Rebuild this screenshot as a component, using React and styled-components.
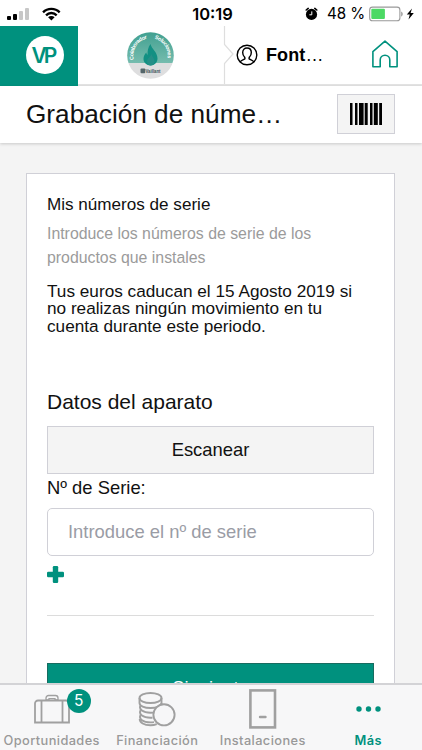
import React from "react";
import styled, { createGlobalStyle } from "styled-components";

const green = "#00917e";
const line = "#d0d0d7";

const GlobalStyle = createGlobalStyle`
  * {
    box-sizing: border-box;
  }
  body {
    margin: 0;
    background: #f4f4f4;
    color: #111;
    font-family: "Liberation Sans", Arial, sans-serif;
    overflow: hidden;
  }
`;

const Screen = styled.div`
  width: 422px;
  height: 750px;
  display: flex;
  flex-direction: column;
  overflow: hidden;
`;

const StatusBar = styled.div`
  height: 26px;
  flex: none;
  display: grid;
  grid-template-columns: 1fr 44px 1fr;
  align-items: center;
  padding: 1px 7px 0;
  background: #fff;
  color: #000;
  font-family: Inter, sans-serif;
`;

const StatusSide = styled.div`
  display: flex;
  align-items: center;
  justify-content: ${({ $end }) => ($end ? "flex-end" : "flex-start")};
`;

const Clock = styled.div`
  padding-left: 3px;
  font-size: 16.5px;
  font-weight: 600;
  text-align: center;
  white-space: nowrap;
`;

const Percent = styled.span`
  font-size: 15.2px;
  letter-spacing: -0.1px;
  margin: 0 4px 0 9px;
  white-space: nowrap;
`;

const Header = styled.header`
  height: 60px;
  flex: none;
  display: flex;
  background: #fff;
`;

const Brand = styled.div`
  width: 78px;
  display: flex;
  align-items: center;
  justify-content: center;
  padding: 0 0 3px 11px;
  background: ${green};
`;

const BrandCircle = styled.div`
  width: 38px;
  height: 38px;
  border-radius: 50%;
  background: #fff;
  color: ${green};
  font-family: Inter, sans-serif;
  font-size: 21px;
  font-weight: 600;
  line-height: 39px;
  letter-spacing: -3px;
  text-indent: -3px;
  text-align: center;
`;

const HeaderMain = styled.div`
  flex: 1;
  display: flex;
  align-items: center;
  border-bottom: 2px solid #e4e4e4;
`;

const Partner = styled.div`
  width: 145px;
  display: flex;
  padding: 0 0 0 48px;
`;

const User = styled.div`
  flex: 1;
  display: flex;
  align-items: center;
  gap: 8px;
  padding: 0 0 0 2px;
  font-size: 18px;
  font-weight: 700;
  color: #000;
`;

const UserName = styled.span`
  letter-spacing: 0.1px;
`;

const Dots = styled.span`
  font-weight: 400;
`;

const HomeLink = styled.div`
  display: flex;
  padding: 0 24px 2px 0;
`;

const TitleBar = styled.div`
  height: 57px;
  flex: none;
  display: flex;
  align-items: center;
  justify-content: space-between;
  padding: 0 27px 1px 26px;
  background: #fff;
  box-shadow: 0 1px 3px rgba(0, 0, 0, 0.18);
  z-index: 1;
`;

const Title = styled.h1`
  margin: 0;
  font-size: 26.2px;
  font-weight: 400;
  line-height: 32px;
`;

const BarcodeButton = styled.button`
  width: 58px;
  height: 40px;
  display: flex;
  align-items: center;
  justify-content: center;
  padding: 0;
  border: 1px solid ${line};
  background: #f4f4f4;
`;

const Content = styled.main`
  flex: 1;
  min-height: 0;
  overflow: hidden;
  padding: 30px 27px 0 26px;
`;

const Card = styled.section`
  height: 600px;
  padding: 21px 20px 0;
  border: 1px solid ${line};
  background: #fff;
`;

const Heading = styled.h2`
  margin: 0;
  font-size: 17.1px;
  font-weight: 400;
  line-height: 20px;
`;

const Hint = styled.p`
  margin: 7px 0 0;
  color: #9b9b9b;
  font-size: 15.85px;
  line-height: 24px;
`;

const Notice = styled.p`
  margin: 13px -6px 0 0;
  font-size: 17.2px;
  line-height: 17.4px;
`;

const FormTitle = styled.h3`
  margin: 53px 0 0;
  font-size: 21px;
  font-weight: 400;
  line-height: 28px;
`;

const ScanButton = styled.button`
  display: block;
  width: 100%;
  height: 48px;
  margin-top: 10px;
  padding: 0;
  border: 1px solid ${line};
  background: #f4f4f4;
  color: #111;
  font-family: inherit;
  font-size: 18.4px;
`;

const Label = styled.label`
  display: block;
  margin-top: 4px;
  font-size: 18.4px;
  line-height: 20px;
`;

const Input = styled.input`
  display: block;
  width: 100%;
  height: 48px;
  margin-top: 10px;
  padding: 0 20px;
  border: 1px solid ${line};
  border-radius: 5px;
  background: #fff;
  font-family: inherit;
  font-size: 18.4px;
  &::placeholder {
    color: #9a9ca5;
    opacity: 1;
  }
`;

const AddButton = styled.div`
  height: 60px;
  padding-top: 10px;
  border-bottom: 1px solid #dcdcdc;
`;

const NextButton = styled.button`
  display: block;
  width: 100%;
  height: 49px;
  margin-top: 47px;
  padding: 0;
  border: 1px solid #176c60;
  background: ${green};
  color: #fff;
  font-family: inherit;
  font-size: 18.4px;
`;

const TabBar = styled.nav`
  height: 67px;
  flex: none;
  display: grid;
  grid-template-columns: repeat(4, 105.5px);
  margin-left: -1px;
  border-top: 2px solid #d3d3d6;
  background: #f7f7f8;
  z-index: 1;
`;

const Tab = styled.div`
  display: flex;
  flex-direction: column;
  align-items: center;
  color: ${({ $active }) => ($active ? green : "#999")};
  font-family: Inter, sans-serif;
  font-size: 12.8px;
  font-weight: ${({ $active }) => ($active ? 600 : 500)};
  letter-spacing: 0.4px;
`;

const TabIcon = styled.div`
  position: relative;
  height: 48px;
  display: flex;
  align-items: center;
`;

const TabLabel = styled.span`
  line-height: 16px;
  white-space: nowrap;
`;

const Badge = styled.span`
  position: absolute;
  top: 4px;
  right: -21px;
  width: 24px;
  height: 24px;
  border-radius: 50%;
  background: ${green};
  color: #fff;
  font-size: 15.5px;
  font-weight: 400;
  line-height: 24px;
  letter-spacing: 0;
  text-align: center;
`;

const SignalIcon = () => (
  <svg width="55" height="16" viewBox="0 0 55 16">
    <rect x="0" y="10" width="4" height="4" rx="1" />
    <rect x="6" y="8" width="4" height="6" rx="1" />
    <rect x="12" y="5" width="4" height="9" rx="1" fill="#c7c7c7" />
    <rect x="18" y="2" width="4" height="12" rx="1" fill="#c7c7c7" />
    <path d="M35.2 5.4a13 13 0 0 1 18.3 0l-1.7 1.8a10.5 10.5 0 0 0-14.9 0z" />
    <path d="M38.2 8.4a8.7 8.7 0 0 1 12.3 0l-1.7 1.8a6.3 6.3 0 0 0-8.9 0z" />
    <path d="M41.1 11.3a4.6 4.6 0 0 1 6.5 0l-3.25 3.2z" />
  </svg>
);

const AlarmIcon = () => (
  <svg width="13" height="14" viewBox="0 0 13 14">
    <circle cx="6.5" cy="7.4" r="5.6" />
    <path d="M1.2 3 3.2 1.4M11.8 3 9.8 1.4" stroke="#000" strokeWidth="1.6" strokeLinecap="round" />
    <path d="M6.8 4.4v3.4H4.4" fill="none" stroke="#fff" strokeWidth="1" />
  </svg>
);

const BatteryIcon = () => (
  <svg width="46" height="16" viewBox="0 0 46 16">
    <rect x=".7" y="1.1" width="30.2" height="13.6" rx="2.8" fill="#fff" stroke="#999" strokeWidth="1.1" />
    <rect x="2.3" y="2.8" width="13.6" height="10.2" rx="1" fill="#4cd964" />
    <path d="M32.2 5.4c2 .8 2 4.3 0 5.1z" fill="#999" />
    <path d="m43 2.4-5.2 6.2h3l-1.3 5 5.3-6.5h-3.2z" />
  </svg>
);

const PartnerLogo = () => (
  <svg width="48" height="48" viewBox="0 0 48 48">
    <defs>
      <linearGradient id="seal" x1="0" y1="0" x2="0" y2="1">
        <stop offset="0" stopColor="#3f9f8f" />
        <stop offset="1" stopColor="#76bcae" />
      </linearGradient>
      <clipPath id="disc">
        <circle cx="24.5" cy="24.5" r="23.3" />
      </clipPath>
      <path id="arc" d="M8.6 31a17.2 17.2 0 1 1 31.8 0" />
    </defs>
    <g clipPath="url(#disc)">
      <rect width="48" height="32" fill="url(#seal)" />
      <rect y="32" width="48" height="16" fill="#dededf" />
    </g>
    <path d="M24.500 13c1 5 7 8 7 14.500c0 4-3 7-7 7s-7-3-7-6.500c0-3 1.300-5 2.800-6.500c.2 1.200.7 2 1.300 2.300c-.3-4 .5-7.500 2.900-10.800z" fill="#129083" />
    <path d="M25.500 23c.6 2.800 3 4.200 3 7.200s-1.600 4.300-3.800 4.300-3.700-1.800-3.700-4c0-3.300 3.500-4.300 4.500-7.500z" fill="#248f87" />
    <text fill="#fff" fontSize="5.4" fontWeight="700">
      <textPath href="#arc" startOffset="2.5" textLength="27.5">Colaborador</textPath>
    </text>
    <text fill="#fff" fontSize="5.4" fontWeight="700">
      <textPath href="#arc" startOffset="37.500" textLength="25.500">Soluciones</textPath>
    </text>
    <rect x="14.500" y="37.500" width="4.800" height="4.800" rx="1" fill="#54666a" />
    <text x="19.500" y="42" fill="#3c5458" fontSize="5.800" fontWeight="700" textLength="15" lengthAdjust="spacingAndGlyphs">
      Vaillant
    </text>
  </svg>
);

const Divider = () => (
  <svg width="11" height="58" viewBox="0 0 11 58" fill="none" stroke="#dedede" strokeWidth="1.200">
    <path d="M1.500 0v18.500l8.500 9.500-8.500 9.500V58" />
  </svg>
);

const UserIcon = () => (
  <svg width="22" height="22" viewBox="0 0 22 22" fill="none" stroke="#000" strokeWidth="1.400">
    <circle cx="11" cy="11" r="9.800" />
    <path d="M4.300 18c.4-1.500 2.800-1.900 4.200-2.800.7-.5.5-1.500 0-2.200-1.300-1.200-1.800-2.800-1.800-4.500C6.700 5.700 8.500 4 11 4s4.300 1.700 4.300 4.500c0 1.700-.5 3.300-1.800 4.500-.5.700-.7 1.700 0 2.200 1.400.9 3.800 1.300 4.200 2.800" />
  </svg>
);

const HomeIcon = () => (
  <svg width="26" height="28" viewBox="0 0 26 28" fill="none" stroke={green} strokeWidth="1.600" strokeLinejoin="round">
    <path d="M.9 26.800V11.600L13 1.200l12.100 10.400v15.200h-7.300v-6.800a4.800 4.800 0 0 0-9.600 0v6.800z" />
  </svg>
);

const bars = [
  [0, 2.5],
  [5, 2.5],
  [9, 4.6],
  [14.7, 3],
  [20, 2.5],
  [23.8, 4],
  [29.2, 2.8],
];

const BarcodeIcon = () => (
  <svg width="32" height="22" viewBox="0 0 32 22">
    {bars.map(([x, w]) => (
      <rect key={x} x={x} width={w} height="22" fill="#000" />
    ))}
  </svg>
);

const PlusIcon = () => (
  <svg width="17" height="17" viewBox="0 0 17 17" fill={green}>
    <rect x="5.800" y="0" width="5.400" height="17" rx="1.200" />
    <rect x="0" y="5.800" width="17" height="5.400" rx="1.200" />
  </svg>
);

const CaseIcon = () => (
  <svg width="36" height="30" viewBox="0 0 36 30" fill="none" stroke="#a0a0a0" strokeWidth="1.800">
    <path d="M1 28.500V9.500a3 3 0 0 1 3-3h28a3 3 0 0 1 3 3v19z" />
    <path d="M7.500 6.500v22M28.500 6.500v22" />
    <path d="M12 6V4a2.500 2.500 0 0 1 2.500-2.500h7A2.500 2.500 0 0 1 24 4v2h-3V4.600h-6V6z" strokeWidth="1.300" />
  </svg>
);

const CoinsIcon = () => (
  <svg width="38" height="36" viewBox="0 0 38 36" fill="none" stroke="#a0a0a0" strokeWidth="1.900">
    <ellipse cx="12.500" cy="7" rx="11" ry="5" />
    <path d="M1.500 7v5c0 2.800 4.900 5 11 5s11-2.200 11-5V7" />
    <path d="M2.500 14.500c-2 4 2.500 7.200 10 7.200 2 0 3.500-.2 5-.6M2.500 19.500c-2 4 2.500 7.200 10 7.200h2M2.500 24.200c-2 4 2.500 7.200 10 7.200 1.200 0 2.400-.1 3.500-.3M1.700 28c0 3.500 4.300 6.300 10.800 6.300 2.400 0 4.500-.4 6.200-1.100M23.500 12v2.500" />
    <circle cx="26" cy="23.800" r="10.600" fill="#f7f7f8" />
  </svg>
);

const BoilerIcon = () => (
  <svg width="28" height="40" viewBox="0 0 28 40" fill="none" stroke="#a0a0a0">
    <rect x="1.400" y="1.400" width="24.600" height="37" strokeWidth="2.600" />
    <path d="M11 28h5.500" strokeWidth="2.400" strokeLinecap="round" />
  </svg>
);

const MoreIcon = () => (
  <svg width="25" height="6" viewBox="0 0 25 6" fill={green}>
    <circle cx="3" cy="3" r="2.700" />
    <circle cx="12.500" cy="3" r="2.700" />
    <circle cx="22" cy="3" r="2.700" />
  </svg>
);

const tabs = [
  { label: "Oportunidades", icon: CaseIcon, badge: 5 },
  { label: "Financiación", icon: CoinsIcon },
  { label: "Instalaciones", icon: BoilerIcon },
  { label: "Más", icon: MoreIcon, active: true },
];

export default function App() {
  return (
    <>
      <GlobalStyle />
      <Screen>
        <StatusBar>
          <StatusSide>
            <SignalIcon />
          </StatusSide>
          <Clock>10:19</Clock>
          <StatusSide $end>
            <AlarmIcon />
            <Percent>48 %</Percent>
            <BatteryIcon />
          </StatusSide>
        </StatusBar>
        <Header>
          <Brand>
            <BrandCircle>VP</BrandCircle>
          </Brand>
          <HeaderMain>
            <Partner>
              <PartnerLogo />
            </Partner>
            <Divider />
            <User>
              <UserIcon />
              <UserName>
                Font<Dots>…</Dots>
              </UserName>
            </User>
            <HomeLink>
              <HomeIcon />
            </HomeLink>
          </HeaderMain>
        </Header>
        <TitleBar>
          <Title>Grabación de núme…</Title>
          <BarcodeButton aria-label="Código de barras">
            <BarcodeIcon />
          </BarcodeButton>
        </TitleBar>
        <Content>
          <Card>
            <Heading>Mis números de serie</Heading>
            <Hint>
              Introduce los números de serie de los
              <br />
              productos que instales
            </Hint>
            <Notice>
              Tus euros caducan el 15 Agosto 2019 si
              <br />
              no realizas ningún movimiento en tu
              <br />
              cuenta durante este periodo.
            </Notice>
            <FormTitle>Datos del aparato</FormTitle>
            <ScanButton>Escanear</ScanButton>
            <Label htmlFor="serie">Nº de Serie:</Label>
            <Input id="serie" placeholder="Introduce el nº de serie" />
            <AddButton>
              <PlusIcon />
            </AddButton>
            <NextButton>Siguiente</NextButton>
          </Card>
        </Content>
        <TabBar>
          {tabs.map(({ label, icon: Icon, badge, active }) => (
            <Tab key={label} $active={active}>
              <TabIcon>
                <Icon />
                {badge ? <Badge>{badge}</Badge> : null}
              </TabIcon>
              <TabLabel>{label}</TabLabel>
            </Tab>
          ))}
        </TabBar>
      </Screen>
    </>
  );
}
